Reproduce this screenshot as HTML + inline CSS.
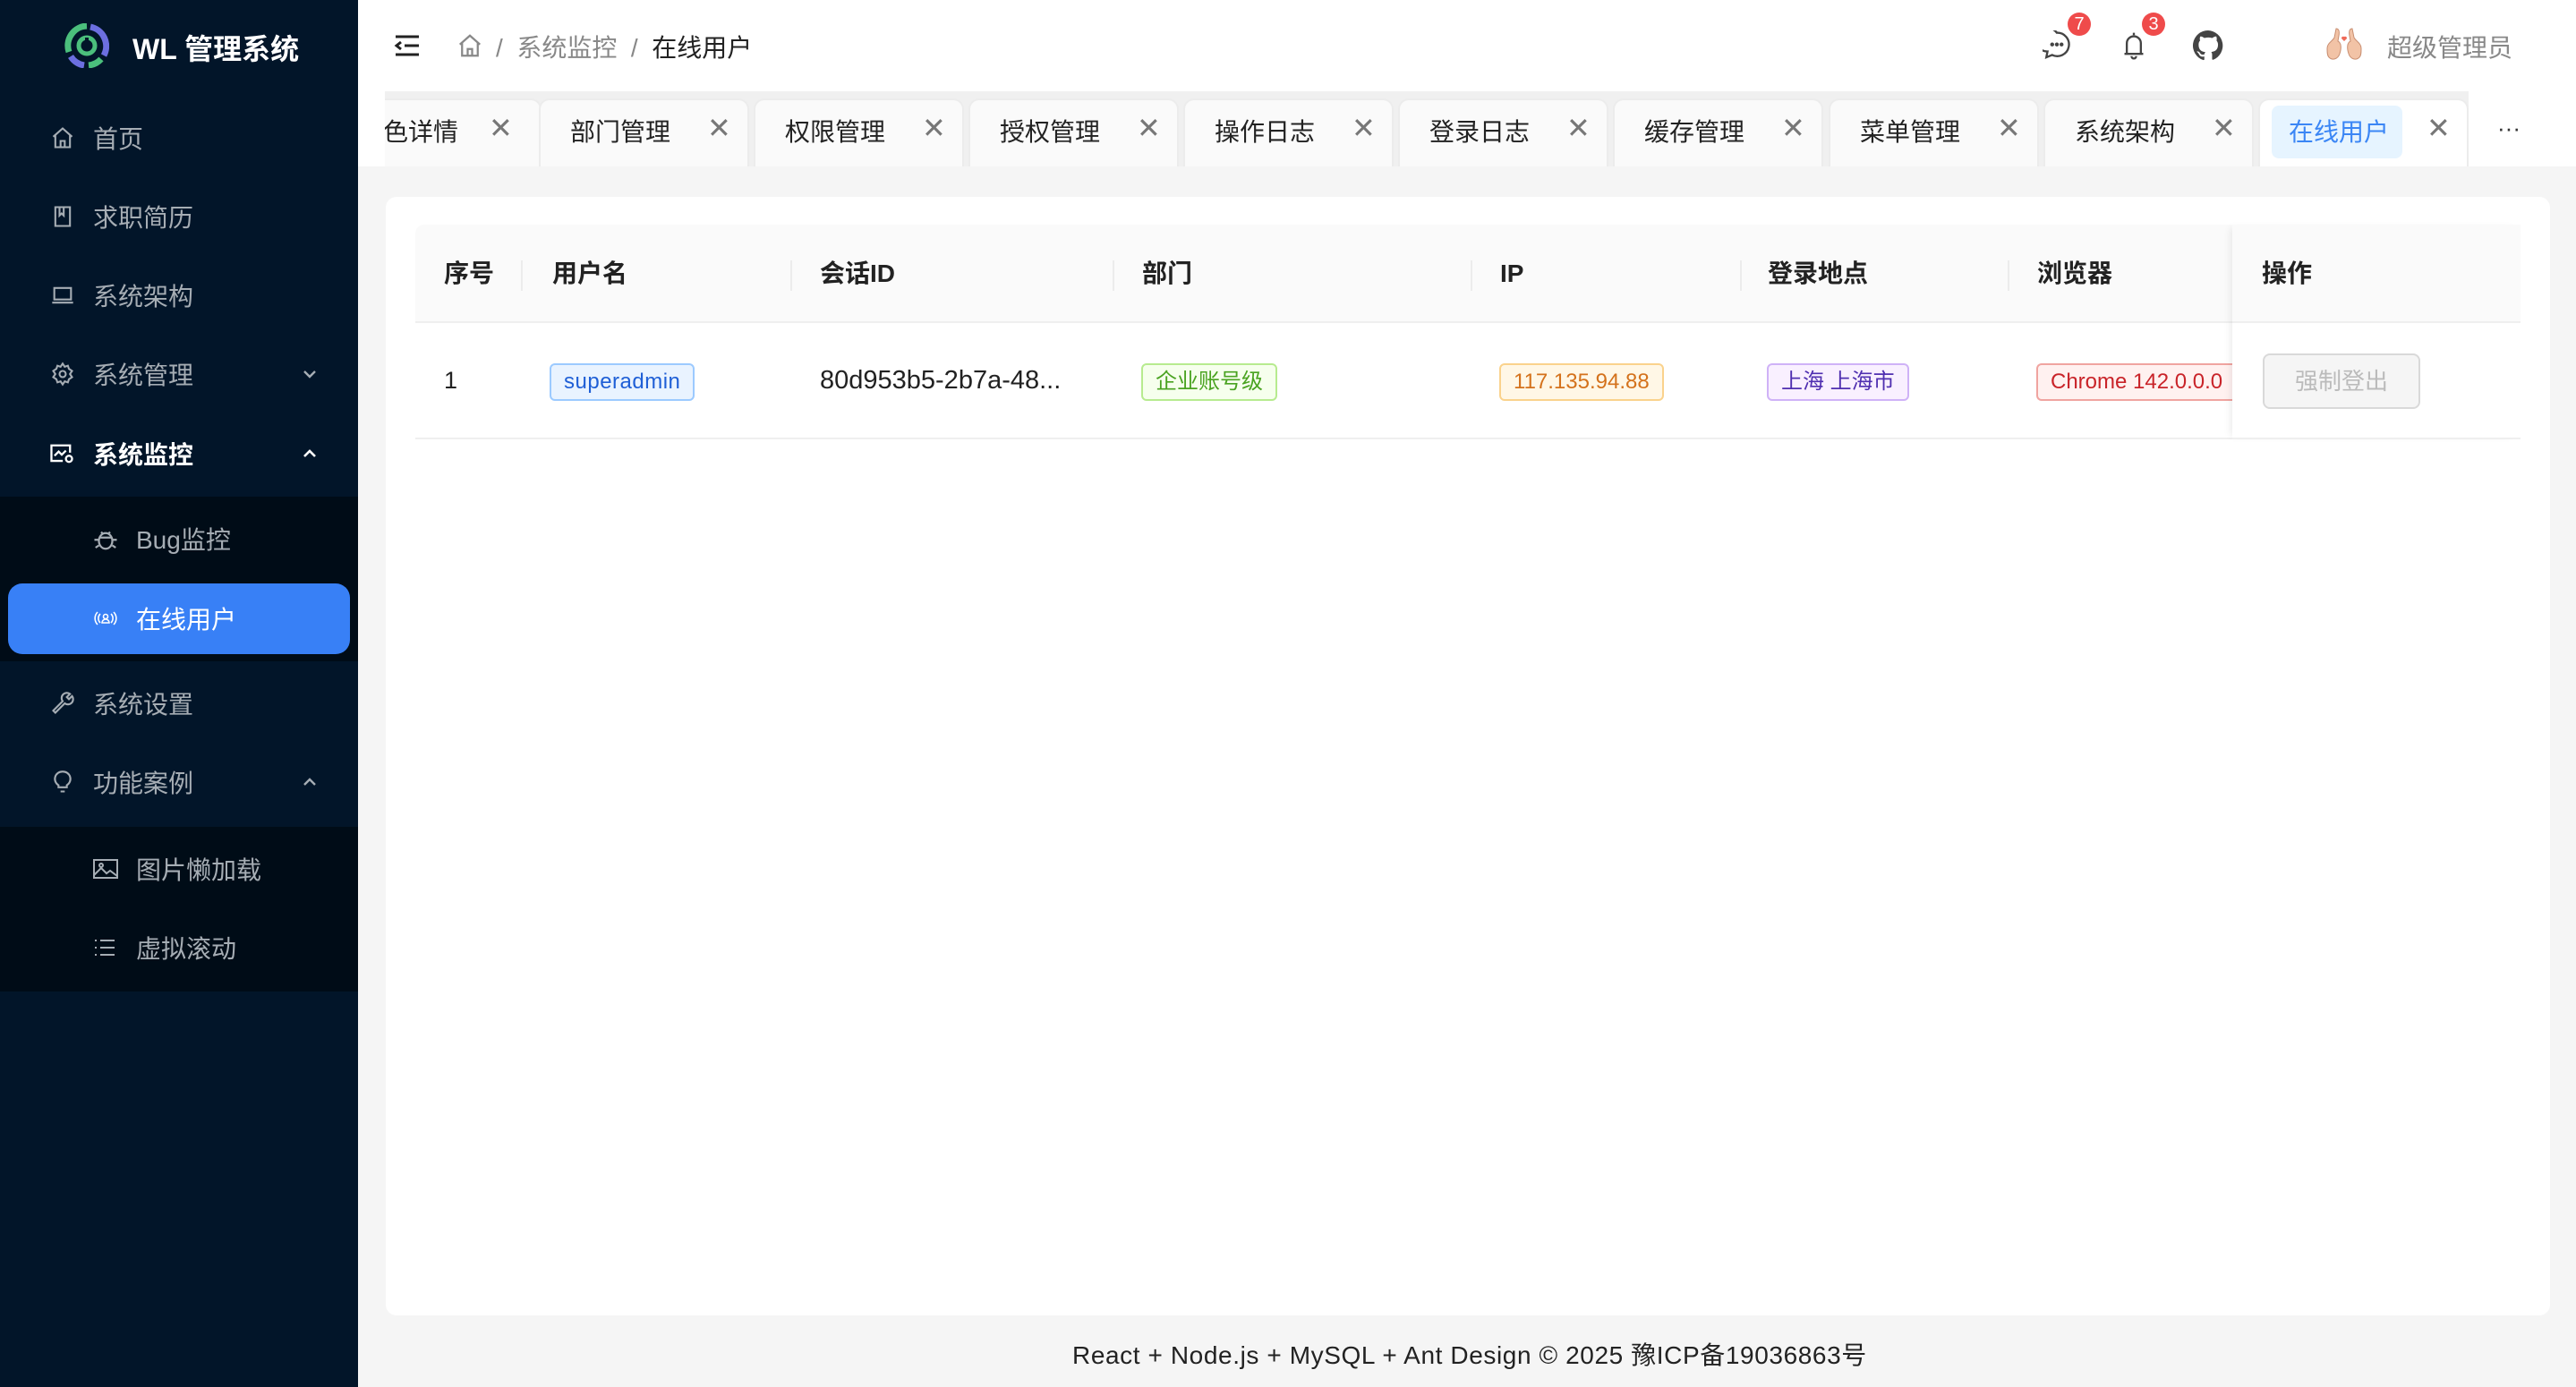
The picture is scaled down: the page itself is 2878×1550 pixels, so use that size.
<!DOCTYPE html>
<html><head><meta charset="utf-8"><style>
*{box-sizing:border-box;margin:0;padding:0}
body{width:2878px;height:1550px;overflow:hidden;background:#f5f5f5;font-family:"Liberation Sans","Noto Sans CJK SC",sans-serif;position:relative;color:#222}
.abs{position:absolute}
#side{left:0;top:0;width:400px;height:1550px;background:#021529;z-index:5}
.mi{position:absolute;left:0;width:400px;height:60px;display:flex;align-items:center;font-size:28px;color:#a6adb4}
.mi svg{position:absolute}
.mi span{position:absolute}
.sub{position:absolute;left:0;width:400px;background:#000c17}
#hdr{left:400px;top:0;width:2478px;height:102px;background:#fff}
#tabs{left:400px;top:102px;width:2478px;height:84px;background:#f0f0f0;overflow:hidden}
.tab{position:absolute;top:8px;height:76px;width:235px;background:#fafafa;border:2px solid #ececec;border-bottom:none;border-radius:12px 12px 0 0;font-size:28px;color:#222}
.tab .t{position:absolute;left:33px;top:14px}
.tab .x{position:absolute;left:186px;top:12px;color:#777;font-size:32px;font-weight:300}
#card{left:431px;top:220px;width:2418px;height:1250px;background:#fff;border-radius:12px}
.th{position:absolute;top:0;height:110px;line-height:110px;font-size:28px;font-weight:bold;color:#222}
.dv{position:absolute;top:40px;width:2px;height:34px;background:#ececec}
.tag{position:absolute;top:45px;height:42px;line-height:38px;padding:0 14px;border:2px solid;border-radius:6px;font-size:24px}
.badge{position:absolute;width:26px;height:26px;border-radius:13px;background:#ef4b4b;color:#fff;font-size:20px;text-align:center;line-height:26px}
</style></head><body>
<div id="side" class="abs">
  <svg class="abs" style="left:72px;top:26px" width="50" height="50" viewBox="0 0 50 50"><path d="M25 3A22 22 0 0 0 5 32" stroke="#4bbf7c" stroke-width="7" fill="none"/><path d="M29 4A22 22 0 0 1 44 36" stroke="#6c6fe0" stroke-width="7" fill="none"/><path d="M7 37A22 22 0 0 0 22 47" stroke="#6c6fe0" stroke-width="7" fill="none"/><path d="M27 47A22 22 0 0 0 41 40" stroke="#4bbf7c" stroke-width="7" fill="none"/><circle cx="25" cy="25" r="9" stroke="#4bbf7c" stroke-width="5" fill="none"/><path d="M25 16v10" stroke="#021529" stroke-width="4"/></svg>
  <div class="abs" style="left:148px;top:30px;font-size:32px;font-weight:bold;color:#fff">WL 管理系统</div>
  <div class="mi" style="top:124px"><svg style="left:56px" width="28" height="28" viewBox="0 0 24 24" fill="none" stroke="#a6adb4" stroke-width="1.8"><path d="M3 11L12 3l9 8M5 9v12h14V9M10 21v-6h4v6"/></svg><span style="left:104px">首页</span></div>
  <div class="mi" style="top:212px"><svg style="left:56px" width="28" height="28" viewBox="0 0 24 24" fill="none" stroke="#a6adb4" stroke-width="1.8"><path d="M5 3h14v18H5zM9 3v8l2-2 2 2V3"/></svg><span style="left:104px">求职简历</span></div>
  <div class="mi" style="top:300px"><svg style="left:56px" width="28" height="28" viewBox="0 0 24 24" fill="none" stroke="#a6adb4" stroke-width="1.8"><path d="M4 5h16v11H4zM2 19h20"/></svg><span style="left:104px">系统架构</span></div>
  <div class="mi" style="top:388px"><svg style="left:56px" width="28" height="28" viewBox="0 0 24 24" fill="none" stroke="#a6adb4" stroke-width="1.8"><circle cx="12" cy="12" r="3"/><path d="M12 2l2 3 3-1 1 3 3 2-2 3 2 3-3 2-1 3-3-1-2 3-2-3-3 1-1-3-3-2 2-3-2-3 3-2 1-3 3 1z"/></svg><span style="left:104px">系统管理</span><svg style="left:336px" width="20" height="20" viewBox="0 0 20 20" fill="none" stroke="#a6adb4" stroke-width="2.4"><path d="M4 7l6 6 6-6"/></svg></div>
  <div class="mi" style="top:477px;color:#fff;font-weight:bold"><svg style="left:54px" width="30" height="28" viewBox="0 0 26 24" fill="none" stroke="#fff" stroke-width="2"><path d="M14 19H3V4h18v7M6 14l4-4 3 3 4-4"/><circle cx="20" cy="17" r="3"/></svg><span style="left:104px">系统监控</span><svg style="left:336px" width="20" height="20" viewBox="0 0 20 20" fill="none" stroke="#fff" stroke-width="2.6"><path d="M4 13l6-6 6 6"/></svg></div>
  <div class="sub" style="top:555px;height:184px"></div>
  <div class="mi" style="top:572px"><svg style="left:103px" width="30" height="30" viewBox="0 0 24 24" fill="none" stroke="#a6adb4" stroke-width="1.8"><ellipse cx="12" cy="14" rx="6" ry="7"/><path d="M8 6l2 2M16 6l-2 2M2 13h4M18 13h4M3 20l3-2M21 20l-3-2M6 11h12"/></svg><span style="left:152px">Bug监控</span></div>
  <div class="abs" style="left:9px;top:652px;width:382px;height:79px;background:#3880f6;border-radius:16px"></div>
  <div class="mi" style="top:661px;color:#fff"><svg style="left:104px" width="28" height="20" viewBox="0 0 28 20" fill="none" stroke="#fff" stroke-width="1.6"><path d="M5 3a10 10 0 0 0 0 14M23 3a10 10 0 0 1 0 14M8 5a7 7 0 0 0 0 10M20 5a7 7 0 0 1 0 10"/><circle cx="14" cy="8" r="2.5"/><path d="M10 15a4 4 0 0 1 8 0z"/></svg><span style="left:152px">在线用户</span></div>
  <div class="mi" style="top:756px"><svg style="left:56px" width="28" height="28" viewBox="0 0 24 24" fill="none" stroke="#a6adb4" stroke-width="1.8"><path d="M3 19l9-9a5 5 0 0 1 7-7l-3 3 2 2 3-3a5 5 0 0 1-7 7l-9 9z"/></svg><span style="left:104px">系统设置</span></div>
  <div class="mi" style="top:844px"><svg style="left:56px" width="28" height="28" viewBox="0 0 24 24" fill="none" stroke="#a6adb4" stroke-width="1.8"><path d="M9 17h6M10 21h4M12 2a7 7 0 0 0-4 13v2h8v-2a7 7 0 0 0-4-13z"/></svg><span style="left:104px">功能案例</span><svg style="left:336px" width="20" height="20" viewBox="0 0 20 20" fill="none" stroke="#a6adb4" stroke-width="2.4"><path d="M4 13l6-6 6 6"/></svg></div>
  <div class="sub" style="top:924px;height:184px"></div>
  <div class="mi" style="top:941px"><svg style="left:103px" width="30" height="26" viewBox="0 0 30 26" fill="none" stroke="#a6adb4" stroke-width="2"><rect x="2" y="3" width="26" height="20"/><path d="M2 20l8-8 6 6 4-3 8 6"/><circle cx="10" cy="9" r="2"/></svg><span style="left:152px">图片懒加载</span></div>
  <div class="mi" style="top:1029px"><svg style="left:104px" width="26" height="24" viewBox="0 0 26 24" fill="none" stroke="#a6adb4" stroke-width="2"><path d="M2 4h2M2 12h2M2 20h2M8 4h16M8 12h16M8 20h16"/></svg><span style="left:152px">虚拟滚动</span></div>
</div>
<div id="hdr" class="abs">
  <svg class="abs" style="left:40px;top:38px" width="30" height="26" viewBox="0 0 30 26" fill="none" stroke="#222" stroke-width="3"><path d="M2 3h26M12 13h16M2 23h26M8 9l-5 4 5 4"/></svg>
  <svg class="abs" style="left:110px;top:36px" width="30" height="30" viewBox="0 0 24 24" fill="none" stroke="#888" stroke-width="1.8"><path d="M3 11L12 3l9 8M5 9v12h14V9M10 21v-6h4v6"/></svg>
  <div class="abs" style="left:154px;top:32px;font-size:28px;color:#888">/ &nbsp;系统监控 &nbsp;/ &nbsp;<span style="color:#222">在线用户</span></div>
  <svg class="abs" style="left:1882px;top:34px" width="32" height="34" viewBox="0 0 24 26" fill="none" stroke="#444" stroke-width="1.8"><path d="M12 2a10 10 0 1 0-8 16l-1 5 5-2a10 10 0 1 0 4-19z"/><circle cx="8" cy="12" r=".8" fill="#444"/><circle cx="12" cy="12" r=".8" fill="#444"/><circle cx="16" cy="12" r=".8" fill="#444"/></svg>
  <div class="badge" style="left:1910px;top:14px">7</div>
  <svg class="abs" style="left:1968px;top:34px" width="32" height="34" viewBox="0 0 24 26" fill="none" stroke="#444" stroke-width="1.8"><path d="M12 2v2M6 20V11a6 6 0 0 1 12 0v9M4 20h16M10 22a2 2 0 0 0 4 0"/></svg>
  <div class="badge" style="left:1993px;top:14px">3</div>
  <svg class="abs" style="left:2050px;top:34px" width="34" height="34" viewBox="0 0 16 16"><path fill="#444" d="M8 0a8 8 0 0 0-2.5 15.6c.4 0 .5-.2.5-.4v-1.5C3.8 14.2 3.3 12.7 3.3 12.7c-.4-.9-.9-1.2-.9-1.200-.7-.5.1-.5.1-.5.8.1 1.200.8 1.200.8.7 1.300 1.900.9 2.400.7 0-.5.3-.9.5-1.100-1.800-.2-3.600-.9-3.600-4 0-.9.3-1.600.8-2.100-.1-.2-.4-1 .1-2.100 0 0 .7-.2 2.200.8a7.4 7.4 0 0 1 4 0c1.500-1 2.200-.8 2.200-.8.4 1.100.2 1.900.1 2.100.5.6.8 1.300.8 2.100 0 3.100-1.900 3.700-3.600 3.900.3.3.5.8.5 1.500v2.200c0 .2.1.5.6.4A8 8 0 0 0 8 0z"/></svg>
  <svg class="abs" style="left:2196px;top:30px" width="46" height="44" viewBox="0 0 46 44"><path d="M4 24c0-6 6-8 8-12l2-10c3 0 4 3 3 8l-1 6c4 2 4 8 2 14-2 6-8 8-12 4-2-2-2-6-2-10z" fill="#f2c3a6" stroke="#c98f72"/><path d="M42 24c0-6-6-8-8-12l-2-10c-3 0-4 3-3 8l1 6c-4 2-4 8-2 14 2 6 8 8 12 4 2-2 2-6 2-10z" fill="#f2c3a6" stroke="#c98f72"/><path d="M23 16l-3-3a2 2 0 0 1 3-2 2 2 0 0 1 3 2z" fill="#ef6b5a"/></svg>
  <div class="abs" style="left:2267px;top:32px;font-size:28px;color:#888">超级管理员</div>
</div>
<div id="tabs" class="abs">
  <div class="tab" style="left:-30px;border-left:none"><span class="t" style="left:58px">色详情</span><span class="x" style="left:176px">✕</span></div>
  <div style="position:absolute;left:0;top:0;width:30px;height:84px;background:#fff"></div>
  <div class="tab" style="left:202px"><span class="t">部门管理</span><span class="x">✕</span></div>
  <div class="tab" style="left:442px"><span class="t">权限管理</span><span class="x">✕</span></div>
  <div class="tab" style="left:682px"><span class="t">授权管理</span><span class="x">✕</span></div>
  <div class="tab" style="left:922px"><span class="t">操作日志</span><span class="x">✕</span></div>
  <div class="tab" style="left:1162px"><span class="t">登录日志</span><span class="x">✕</span></div>
  <div class="tab" style="left:1402px"><span class="t">缓存管理</span><span class="x">✕</span></div>
  <div class="tab" style="left:1643px"><span class="t">菜单管理</span><span class="x">✕</span></div>
  <div class="tab" style="left:1883px"><span class="t">系统架构</span><span class="x">✕</span></div>
  <div class="tab" style="left:2123px;background:#fff;height:78px"><div style="position:absolute;left:13px;top:6px;width:146px;height:59px;background:#e6f4ff;border-radius:8px"></div><span class="t" style="left:32px;color:#3b86f5">在线用户</span><span class="x">✕</span></div>
  <div class="abs" style="left:2358px;top:0;width:120px;height:84px;background:#fff"></div>
  <div class="abs" style="left:2390px;top:26px;font-size:26px;color:#333">···</div>
</div>
<div id="card" class="abs">
  <div class="abs" style="left:33px;top:31px;width:2352px;height:110px;background:#fafafa;border-radius:10px 10px 0 0;border-bottom:2px solid #efefef"></div>
  <div class="abs" style="left:33px;top:31px;width:2352px;height:240px">
    <div class="th" style="left:32px">序号</div><div class="dv" style="left:118px"></div>
    <div class="th" style="left:153px">用户名</div><div class="dv" style="left:419px"></div>
    <div class="th" style="left:452px">会话ID</div><div class="dv" style="left:779px"></div>
    <div class="th" style="left:812px">部门</div><div class="dv" style="left:1179px"></div>
    <div class="th" style="left:1212px">IP</div><div class="dv" style="left:1480px"></div>
    <div class="th" style="left:1511px">登录地点</div><div class="dv" style="left:1779px"></div>
    <div class="th" style="left:1812px">浏览器</div>
    <div class="abs" style="left:0;top:110px;width:2352px;height:130px;border-bottom:2px solid #efefef">
      <div class="abs" style="left:32px;top:49px;font-size:27px">1</div>
      <div class="tag" style="left:150px;color:#1f5fd6;background:#e9f3ff;border-color:#9ccaff;letter-spacing:.5px">superadmin</div>
      <div class="abs" style="left:452px;top:48px;font-size:29px">80d953b5-2b7a-48...</div>
      <div class="tag" style="left:811px;color:#4aa321;background:#f6ffed;border-color:#b7eb8f">企业账号级</div>
      <div class="tag" style="left:1211px;color:#d4721c;background:#fff7e6;border-color:#fad28c">117.135.94.88</div>
      <div class="tag" style="left:1510px;color:#4f2fb0;background:#f9f0ff;border-color:#cfb2f7">上海 上海市</div>
      <div class="tag" style="left:1811px;color:#c9242a;background:#fff1f0;border-color:#f0a4a0;border-right:none;border-radius:6px 0 0 6px;width:220px;overflow:hidden;white-space:nowrap">Chrome 142.0.0.0</div>
    </div>
    <div class="abs" style="left:2030px;top:0;width:322px;height:240px;background:transparent;box-shadow:-6px 0 8px -4px rgba(0,0,0,.08)">
      <div class="abs" style="left:0;top:0;width:322px;height:110px;background:#fafafa;border-bottom:2px solid #efefef"></div>
      <div class="th" style="left:33px">操作</div>
      <div class="abs" style="left:0;top:110px;width:322px;height:130px;background:#fff;border-bottom:2px solid #efefef"></div>
      <div class="abs" style="left:34px;top:144px;width:176px;height:62px;border:2px solid #d9d9d9;border-radius:8px;background:#f5f5f5;color:#bbb;font-size:26px;text-align:center;line-height:58px">强制登出</div>
    </div>
  </div>
</div>
<div class="abs" style="left:1198px;top:1493px;font-size:28px;color:#222;white-space:nowrap;letter-spacing:0.6px">React + Node.js + MySQL + Ant Design © 2025 豫ICP备19036863号</div>
</body></html>
